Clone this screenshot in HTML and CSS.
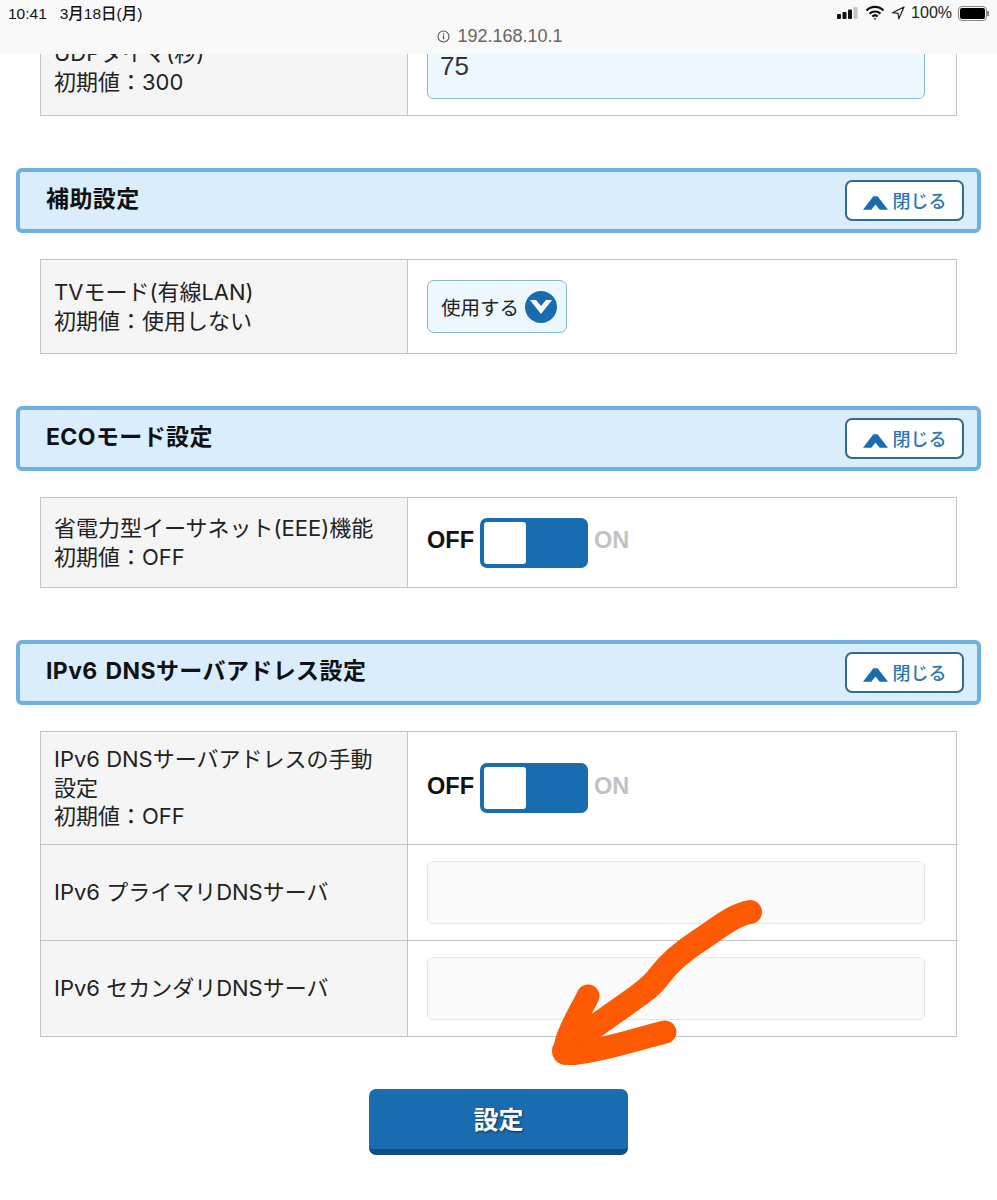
FILE: index.html
```html
<!DOCTYPE html>
<html lang="ja">
<head>
    <meta charset="UTF-8">
    <meta name="viewport" content="width=device-width, initial-scale=1.0">
    <title>192.168.10.1</title>
    <link rel="stylesheet" href="styles.css">
</head>
<body>
    <div class="browser-bar">
        <div class="status-row">
            <div class="status-time">10:41&nbsp;&nbsp;&nbsp;3月18日(月)</div>
            <div class="status-icons">
                <svg width="22" height="14" viewBox="0 0 22 14"><rect x="0" y="8" width="4" height="5" rx="1" fill="#111"/><rect x="5.500" y="6" width="4" height="7" rx="1" fill="#111"/><rect x="11" y="3.500" width="4" height="9.500" rx="1" fill="#111"/><rect x="16.500" y="1" width="4" height="12" rx="1" fill="#c4c4c4"/></svg>
                <svg class="wifi" width="20" height="16" viewBox="0 0 20 16"><path d="M1.500 5.500a12 12 0 0 1 17 0M4.500 8.700a8 8 0 0 1 11 0M7.300 11.500a4 4 0 0 1 5.400 0" fill="none" stroke="#111" stroke-width="2.200"/><path d="M8.500 13.200h3L10 15z" fill="#111"/></svg>
                <svg class="arrow-loc" width="14" height="14" viewBox="0 0 14 14"><path d="M13 1 1.500 6.700 7 7.300 7.800 12.800z" fill="none" stroke="#222" stroke-width="1.200" stroke-linejoin="round"/></svg>
                <span class="battery-text">100%</span>
                <div class="battery"><div class="battery-fill"></div></div>
            </div>
        </div>
        <div class="url-row">
            <svg width="15" height="15" viewBox="0 0 15 15"><circle cx="7.500" cy="7.500" r="5.500" fill="none" stroke="#555" stroke-width="1.100"/><rect x="6.900" y="6.400" width="1.300" height="4" fill="#555"/><rect x="6.900" y="4.200" width="1.300" height="1.300" fill="#555"/></svg>
            <span>192.168.10.1</span>
        </div>
    </div>

    <div class="content">
        <table class="setting-table first-table">
            <tr class="row-udp">
                <th>UDPタイマ(秒)<br>初期値：300</th>
                <td><div class="text-input active">75</div></td>
            </tr>
        </table>

        <div class="section-head">
            <h2>補助設定</h2>
            <button class="close-btn"><svg width="25" height="15" viewBox="0 0 24 14"><path d="M0 14 10 1h4l10 13h-8l-4-5-4 5z" fill="#1a6cb0"/></svg>閉じる</button>
        </div>
        <table class="setting-table">
            <tr class="row-tv">
                <th>TVモード(有線LAN)<br>初期値：使用しない</th>
                <td>
                    <div class="select-box">使用する
                        <span class="select-arrow"><svg width="22" height="14" viewBox="0 0 22 14"><path d="M0 0h6l5 6 5-6h6L11 14z" fill="#fff"/></svg></span>
                    </div>
                </td>
            </tr>
        </table>

        <div class="section-head">
            <h2>ECOモード設定</h2>
            <button class="close-btn"><svg width="25" height="15" viewBox="0 0 24 14"><path d="M0 14 10 1h4l10 13h-8l-4-5-4 5z" fill="#1a6cb0"/></svg>閉じる</button>
        </div>
        <table class="setting-table">
            <tr class="row-eee">
                <th>省電力型イーサネット(EEE)機能<br>初期値：OFF</th>
                <td>
                    <div class="switch-wrap">
                        <span class="switch-off">OFF</span>
                        <div class="switch"><div class="switch-knob"></div></div>
                        <span class="switch-on">ON</span>
                    </div>
                </td>
            </tr>
        </table>

        <div class="section-head">
            <h2>IPv6 DNSサーバアドレス設定</h2>
            <button class="close-btn"><svg width="25" height="15" viewBox="0 0 24 14"><path d="M0 14 10 1h4l10 13h-8l-4-5-4 5z" fill="#1a6cb0"/></svg>閉じる</button>
        </div>
        <table class="setting-table">
            <tr class="row-manual">
                <th>IPv6 DNSサーバアドレスの手動設定<br>初期値：OFF</th>
                <td>
                    <div class="switch-wrap">
                        <span class="switch-off">OFF</span>
                        <div class="switch"><div class="switch-knob"></div></div>
                        <span class="switch-on">ON</span>
                    </div>
                </td>
            </tr>
            <tr class="row-dns">
                <th>IPv6 プライマリDNSサーバ</th>
                <td><div class="text-input"></div></td>
            </tr>
            <tr class="row-dns">
                <th>IPv6 セカンダリDNSサーバ</th>
                <td><div class="text-input"></div></td>
            </tr>
        </table>

        <div class="submit-row">
            <button class="submit-btn">設定</button>
        </div>
    </div>

    <!-- 手書きの矢印 -->
    <svg class="hand-arrow" width="240" height="190" viewBox="0 0 240 190">
        <path d="M205 19C188 22 172 36 155 47C138 58 124 70 115 82C108 92 102 96 94 102C72 118 48 134 25 152" fill="none" stroke="#fd5a03" stroke-width="24" stroke-linecap="round" stroke-linejoin="round"/>
        <path d="M43 103C36 118 26 132 21 150C19 158 24 162 32 160C60 157 92 146 120 139" fill="none" stroke="#fd5a03" stroke-width="23" stroke-linecap="round" stroke-linejoin="round"/>
        <circle cx="21" cy="158" r="14" fill="#fd5a03"/>
    </svg>
</body>
</html>
```

FILE: styles.css
```css
* { box-sizing: border-box; }
body { margin: 0; height: 1200px; overflow: hidden; background: #fff; color: #222; font-family: "Inter", "Noto Sans CJK JP", sans-serif; font-size: 22px; position: relative; }

.browser-bar { position: absolute; top: 0; left: 0; width: 100%; height: 54px; background: #f9f9f9; z-index: 2; font-family: "Liberation Sans", "Noto Sans CJK JP", sans-serif; }
.status-row { display: flex; justify-content: space-between; align-items: center; height: 26px; padding: 0 10px 0 8px; }
.status-time { margin-bottom: 2px; font-size: 15.500px; font-weight: 500; color: #111; }
.status-icons { display: flex; align-items: center; gap: 6px; }
.battery-text { font-size: 16px; color: #222; }
.battery { position: relative; width: 29px; height: 15px; border: 1px solid #888; border-radius: 4px; padding: 1px; }
.battery::after { content: ""; position: absolute; right: -3px; top: 4px; width: 2px; height: 5px; background: #888; }
.battery-fill { height: 100%; background: #000; border-radius: 2px; }
.url-row { display: flex; justify-content: center; align-items: center; gap: 6px; height: 20px; padding-left: 2px; font-size: 18px; color: #666; }

.setting-table { width: 917px; margin: 0 0 0 40px; border-collapse: collapse; table-layout: fixed; }
.setting-table th { width: 367px; padding: 0 22px 0 13px; background: #f5f5f5; border: 1px solid #c4c4c4; font-weight: normal; text-align: left; line-height: 28.500px; vertical-align: middle; }
.setting-table td { padding: 0 31px 0 19px; border: 1px solid #c4c4c4; vertical-align: middle; }
.row-udp { height: 115px; }
.row-udp th { padding-top: 19px; }
.row-udp td { vertical-align: bottom; padding-bottom: 16px; }
.row-tv { height: 94px; }
.row-eee { height: 90px; }
.row-manual { height: 113px; }
.row-dns { height: 96px; }

.section-head { display: flex; justify-content: space-between; align-items: center; width: 965px; height: 65px; margin: 52px 0 26px 16px; padding: 0 13px 0 26px; background: #d9edfc; border: 4px solid #6cb1df; border-radius: 6px; }
.section-head h2 { margin: 0 0 7px; font-size: 23px; font-weight: bold; letter-spacing: 0.400px; word-spacing: 2px; color: #111; }
.close-btn { display: flex; align-items: center; justify-content: center; gap: 5px; width: 119px; height: 41px; padding: 0 0 2px; background: #fff; border: 2px solid #2f6d90; border-radius: 7px; color: #2f78ad; font-family: inherit; font-size: 18px; font-weight: 500; }
.close-btn svg { margin-top: 6px; }

.text-input { height: 63px; background: #fafafa; border: 1px solid #e6e6e6; border-radius: 6px; padding: 0 12px; }
.text-input.active { height: 66px; background: #ecf7fe; border-color: #84b9d6; color: #333; font-family: "Liberation Sans", sans-serif; font-size: 26px; line-height: 64px; }
.select-box { display: inline-flex; align-items: center; justify-content: space-between; width: 140px; height: 53px; padding: 0 9px 0 13px; background: #ecf7fe; border: 1px solid #84b9d6; border-radius: 7px; font-size: 19.500px; color: #222; }
.select-arrow { display: flex; align-items: center; justify-content: center; width: 32px; height: 32px; border-radius: 50%; background: #1a6cb0; }

.switch-wrap { display: flex; align-items: center; gap: 6px; font-family: "Liberation Sans", sans-serif; font-size: 23.500px; }
.switch-off { padding-bottom: 4px; font-weight: bold; color: #111; }
.switch-on { padding-bottom: 4px; font-weight: bold; color: #c2c2c2; }
.switch { width: 108px; height: 50px; padding: 4px; background: #1a6cb0; border-radius: 7px; }
.switch-knob { width: 42px; height: 42px; background: #fff; border-radius: 3px; }

.submit-row { display: flex; justify-content: center; margin-top: 52px; }
.submit-btn { width: 259px; height: 66px; padding: 0 0 2px; background: #1a6cb0; border: 0; border-bottom: 6px solid #124f80; border-radius: 7px; color: #fff; font-family: inherit; font-size: 25px; font-weight: bold; text-shadow: 1px 1px 2px #0a3050; }

.hand-arrow { position: absolute; left: 545px; top: 893px; z-index: 1; }
```
